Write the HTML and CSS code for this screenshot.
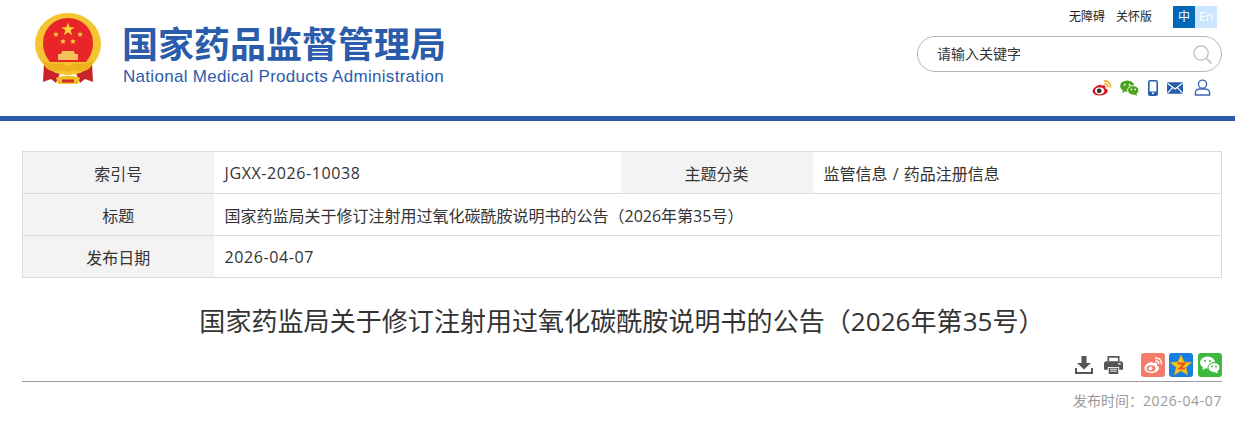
FILE: index.html
```html
<!DOCTYPE html>
<html lang="zh-CN">
<head>
    <meta charset="utf-8">
    <title>国家药监局关于修订注射用过氧化碳酰胺说明书的公告（2026年第35号）</title>
    <link rel="stylesheet" href="styles.css">
</head>
<body>
    <div class="header">
        <div class="logo">
            <svg class="emblem" viewBox="0 0 66 72" width="66" height="72">
                <defs>
                    <polygon id="star" points="0,-1 .225,-.309 .951,-.309 .363,.118 .588,.809 0,.382 -.588,.809 -.363,.118 -.951,-.309 -.225,-.309"/>
                </defs>
                <path d="M9 50 L8 69 L16 66 L21 70 L26 58 Z" fill="#c9232b"/>
                <path d="M57 50 L58 69 L50 66 L45 70 L40 58 Z" fill="#c9232b"/>
                <ellipse cx="33" cy="31" rx="33" ry="31" fill="#f6c431"/>
                <path d="M33 5 C47 5 58 16 58 30 C58 38 55 44 51 49 H15 C11 44 8 38 8 30 C8 16 19 5 33 5 Z" fill="#e8262a"/>
                <g fill="#fcd634">
                    <use href="#star" transform="translate(33 16.500) scale(7)"/>
                    <use href="#star" transform="translate(21 21.500) scale(3.200)"/>
                    <use href="#star" transform="translate(45 21.500) scale(3.200)"/>
                    <use href="#star" transform="translate(28 28.500) scale(3.200)"/>
                    <use href="#star" transform="translate(38 28.500) scale(3.200)"/>
                </g>
                <path d="M27 38 H39 L40 41 H43 V47 H23 V41 H26 Z" fill="#f4c25a"/>
                <path d="M7 47 C13 51 20 52 25 50 L33 53 L41 50 C46 52 53 51 59 47 L55 55 C49 60 43 58 39 57 L33 59 L27 57 C23 58 17 60 11 55 Z" fill="#eeb01c"/>
                <path d="M21 65 C26 62 40 62 45 65 L43 71 H23 Z" fill="#f3bd25"/>
                <path d="M27 66.500 H39 V69.500 H27 Z" fill="#cf2a28"/>
            </svg>
            <div class="logo-text">
                <div class="logo-cn">国家药品监督管理局</div>
                <div class="logo-en">National Medical Products Administration</div>
            </div>
        </div>
        <div class="tools">
            <div class="tools-top">
                <a class="tool-link">无障碍</a>
                <a class="tool-link">关怀版</a>
                <div class="lang">
                    <span class="lang-on">中</span>
                    <span class="lang-off">En</span>
                </div>
            </div>
            <div class="search">
                <span class="search-text">请输入关键字</span>
                <svg viewBox="0 0 20 20" width="19" height="19">
                    <circle cx="8.500" cy="8.500" r="7.500" fill="none" stroke="#bbb" stroke-width="1.300"/>
                    <path d="M13.800 13.800 L19.500 19.500" stroke="#bbb" stroke-width="1.500"/>
                </svg>
            </div>
            <div class="share-top">
                <svg class="ic-weibo" viewBox="0 0 21 17" width="20" height="16">
                    <path d="M8.500 5 C3.500 6 0.500 9.500 0.500 12 C0.500 15 4.500 16.500 8.500 16.500 C13.500 16.500 16.500 14 16.500 11.500 C16.500 9.500 14.500 9.200 14 9 C15 6.500 13 5 10.500 6 C9 6.500 10.200 3.800 8.500 5 Z" fill="#d8181f"/>
                    <ellipse cx="8" cy="11.500" rx="5" ry="3.800" fill="#fff"/>
                    <circle cx="7.500" cy="11.500" r="2.500" fill="#333"/>
                    <path d="M12.500 1 C16.500 0.500 20 3.500 19.500 8 M13 4 C15 3.800 16.800 5.500 16.500 7.500" fill="none" stroke="#f2a81d" stroke-width="1.700"/>
                </svg>
                <svg viewBox="0 0 20 17" width="19" height="16">
                    <ellipse cx="7.500" cy="6.500" rx="7.500" ry="6" fill="#4da31f"/>
                    <path d="M3 10 L2.500 14 L7 11 Z" fill="#4da31f"/>
                    <ellipse cx="14" cy="11" rx="6" ry="5" fill="#4da31f" stroke="#fff" stroke-width="1"/>
                    <path d="M17 14 L18 17 L14 15 Z" fill="#4da31f"/>
                    <circle cx="5" cy="5" r="1" fill="#fff"/>
                    <circle cx="10" cy="5" r="1" fill="#fff"/>
                    <circle cx="12" cy="10" r=".9" fill="#fff"/>
                    <circle cx="16" cy="10" r=".9" fill="#fff"/>
                </svg>
                <svg viewBox="0 0 10 16" width="10" height="16">
                    <rect x="0.800" y="0.800" width="8.400" height="14.400" rx="1.500" fill="#fff" stroke="#2b5cab" stroke-width="1.600"/>
                    <rect x="0.800" y="11.500" width="8.400" height="3.700" fill="#2b5cab"/>
                    <circle cx="5" cy="13.300" r="1" fill="#fff"/>
                </svg>
                <svg viewBox="0 0 17 12" width="16" height="12">
                    <rect width="17" height="12" rx="1" fill="#2b5cab"/>
                    <path d="M0.500 1 L8.500 7 L16.500 1 M0.500 11.500 L6 5.500 M16.500 11.500 L11 5.500" fill="none" stroke="#fff" stroke-width="1.200"/>
                </svg>
                <svg class="user" viewBox="0 0 17 18" width="17" height="17">
                    <circle cx="8.500" cy="5.500" r="4.300" fill="none" stroke="#3d64b4" stroke-width="1.500"/>
                    <path d="M1 17 V14.500 C1 12 3.500 10.500 6 10.500 H11 C13.500 10.500 16 12 16 14.500 V17 Z" fill="none" stroke="#3d64b4" stroke-width="1.500"/>
                </svg>
            </div>
        </div>
    </div>

    <div class="main">
        <table class="info">
            <colgroup>
                <col class="col-first">
                <col class="col-value">
                <col class="col-label">
                <col>
            </colgroup>
            <tr>
                <th>索引号</th>
                <td class="num">JGXX-2026-10038</td>
                <th>主题分类</th>
                <td class="subject">监管信息 / 药品注册信息</td>
            </tr>
            <tr>
                <th>标题</th>
                <td colspan="3">国家药监局关于修订注射用过氧化碳酰胺说明书的公告（2026年第35号）</td>
            </tr>
            <tr>
                <th>发布日期</th>
                <td colspan="3" class="num">2026-04-07</td>
            </tr>
        </table>

        <h1 class="title">国家药监局关于修订注射用过氧化碳酰胺说明书的公告（2026年第35号）</h1>

        <div class="actions">
            <svg class="act-down" viewBox="0 0 18 18" width="18" height="18">
                <path d="M6.500 0 H11.500 V7 H16 L9 13.500 L2 7 H6.500 Z" fill="#555"/>
                <path d="M0 12 V18 H18 V12 H16 V16 H2 V12 Z" fill="#555"/>
            </svg>
            <svg class="act-print" viewBox="0 0 20 20" width="19" height="20">
                <path d="M4.500 6 V1.500 H15.500 V6" fill="none" stroke="#555" stroke-width="1.700"/>
                <path d="M2.500 6 H17.500 Q20 6 20 8.500 V15 H16 V12 H4 V15 H0 V8.500 Q0 6 2.500 6 Z" fill="#555"/>
                <path d="M5 13 H15 V19.500 H5 Z" fill="#555"/>
                <path d="M6.500 14.500 H13.500 M6.500 16.500 H13.500" stroke="#fff" stroke-width="1"/>
                <rect x="15" y="8" width="2.500" height="1.500" fill="#fff"/>
            </svg>
            <div class="share">
                <svg viewBox="0 0 24 24" width="24" height="24">
                    <rect width="24" height="24" rx="3" fill="#f77b6b"/>
                    <path d="M10 9 C6 10 3.500 13 3.500 15.500 C3.500 18.500 7 20 10.500 20 C15 20 18 17.500 18 15 C18 13.200 16.500 13 16 12.700 C17 10.500 15 9 12.500 10 C11 10.500 12 8 10 9 Z" fill="#fff"/>
                    <ellipse cx="10" cy="15.500" rx="4.500" ry="3.300" fill="#f77b6b"/>
                    <circle cx="9.500" cy="15.500" r="2" fill="#fff"/>
                    <path d="M14 5 C18 4.500 21 7.500 20.500 11.500 M14.500 8 C16.500 7.800 18 9.300 17.800 11" fill="none" stroke="#fff" stroke-width="1.500"/>
                </svg>
                <svg viewBox="0 0 24 24" width="24" height="24">
                    <rect width="24" height="24" rx="3" fill="#1580e0"/>
                    <path d="M12 2 L15 9 L22.500 9.500 L16.800 14.300 L18.700 21.800 L12 17.800 L5.300 21.800 L7.200 14.300 L1.500 9.500 L9 9 Z" fill="#fcc419" stroke="#e8a317" stroke-width=".6"/>
                    <path d="M8.500 10.500 H15.500 L10.500 15.500 H16" fill="none" stroke="#e2502a" stroke-width="1.800"/>
                </svg>
                <svg viewBox="0 0 24 24" width="24" height="24">
                    <rect width="24" height="24" rx="3" fill="#3cb93e"/>
                    <ellipse cx="9.500" cy="9.500" rx="7.500" ry="6" fill="#fff"/>
                    <path d="M5 13 L4.500 17 L9 14.500 Z" fill="#fff"/>
                    <ellipse cx="16" cy="14.500" rx="6" ry="5" fill="#fff" stroke="#3cb93e" stroke-width="1"/>
                    <path d="M19 17.500 L20 20.500 L16 19 Z" fill="#fff"/>
                    <circle cx="7" cy="8" r="1" fill="#3cb93e"/>
                    <circle cx="12" cy="8" r="1" fill="#3cb93e"/>
                    <circle cx="14" cy="13.500" r=".9" fill="#3cb93e"/>
                    <circle cx="18" cy="13.500" r=".9" fill="#3cb93e"/>
                </svg>
            </div>
        </div>

        <div class="pubdate">发布时间：<span class="num">2026-04-07</span></div>
    </div>
</body>
</html>
```

FILE: styles.css
```css
html, body, div, h1, table, th, td {
    margin: 0;
    padding: 0;
}

body {
    background: #fff;
    color: #333;
    font-family: "Open Sans", "Noto Sans CJK SC", sans-serif;
    overflow: hidden;
}

.num {
    letter-spacing: .6px;
}

/* header */
.header {
    display: flex;
    justify-content: space-between;
    height: 116px;
    padding: 0 13px 0 35px;
    border-bottom: 5px solid #2b5cab;
}

.logo {
    display: flex;
    align-items: flex-start;
    padding-top: 13px;
}

.logo-text {
    margin-left: 21px;
}

.logo-cn {
    margin-top: 5px;
    font-family: "Noto Sans CJK SC", sans-serif;
    font-size: 36px;
    font-weight: 700;
    line-height: 48px;
    color: #2b5cab;
    white-space: nowrap;
}

.logo-en {
    margin-left: 1px;
    font-family: "Liberation Sans", sans-serif;
    font-size: 17px;
    line-height: 21px;
    letter-spacing: .3px;
    color: #2b5cab;
    white-space: nowrap;
}

.tools {
    width: 305px;
    display: flex;
    flex-direction: column;
}

.tools-top {
    display: flex;
    justify-content: flex-end;
    align-items: center;
    height: 22px;
    margin-top: 6px;
    padding-right: 5px;
    font-size: 12px;
    color: #222;
}

.tool-link {
    margin-right: 11px;
    margin-bottom: 2px;
}

.lang {
    display: flex;
    margin-left: 10px;
}

.lang span {
    width: 22px;
    height: 22px;
    line-height: 22px;
    text-align: center;
}

.lang-on {
    background: #0068b7;
    color: #fff;
}

.lang-off {
    background: #cce6ff;
    color: #fff;
}

.search {
    display: flex;
    justify-content: space-between;
    align-items: center;
    box-sizing: border-box;
    height: 36px;
    margin-top: 8px;
    padding: 0 9px 0 19px;
    border: 1px solid #b5b5b5;
    border-radius: 18px;
    font-size: 14px;
}

.search-text {
    margin-bottom: 2px;
}

.share-top {
    display: flex;
    justify-content: flex-end;
    align-items: center;
    gap: 9px;
    margin-top: 7px;
    padding-right: 11px;
}

.share-top .ic-weibo {
    margin-right: -1px;
}

.share-top .user {
    margin-left: 2px;
}

/* article */
.main {
    padding: 30px 13px 0 22px;
}

.info {
    width: 1200px;
    border: 1px solid #dcdcdc;
    border-collapse: collapse;
    table-layout: fixed;
    font-size: 16px;
    color: #333;
}

.col-first {
    width: 191px;
}

.col-label {
    width: 192px;
}

.col-value {
    width: 407px;
}

.info th,
.info td {
    height: 41px;
    border-top: 1px solid #dcdcdc;
    border-bottom: 1px solid #dcdcdc;
    font-weight: normal;
}

.info th {
    background: #f3f3f3;
    text-align: center;
}

.info td {
    padding-left: 11px;
    text-align: left;
    background: #fff;
}

.info td.subject {
    word-spacing: 1px;
}

.title {
    margin-top: 23px;
    font-size: 26px;
    font-weight: normal;
    line-height: 40px;
    letter-spacing: .06px;
    text-align: center;
    color: #333;
    white-space: nowrap;
}

.actions {
    display: flex;
    justify-content: flex-end;
    align-items: center;
    height: 24px;
    margin-top: 12px;
    padding-bottom: 4px;
    border-bottom: 1px solid #999;
}

.act-down {
    margin-right: 11px;
}

.share {
    display: flex;
    gap: 4px;
    margin-left: 18px;
}

.share svg:last-child {
    margin-left: 1px;
}

.pubdate {
    margin-top: 9px;
    font-size: 14px;
    line-height: 20px;
    color: #999;
    text-align: right;
}
```
